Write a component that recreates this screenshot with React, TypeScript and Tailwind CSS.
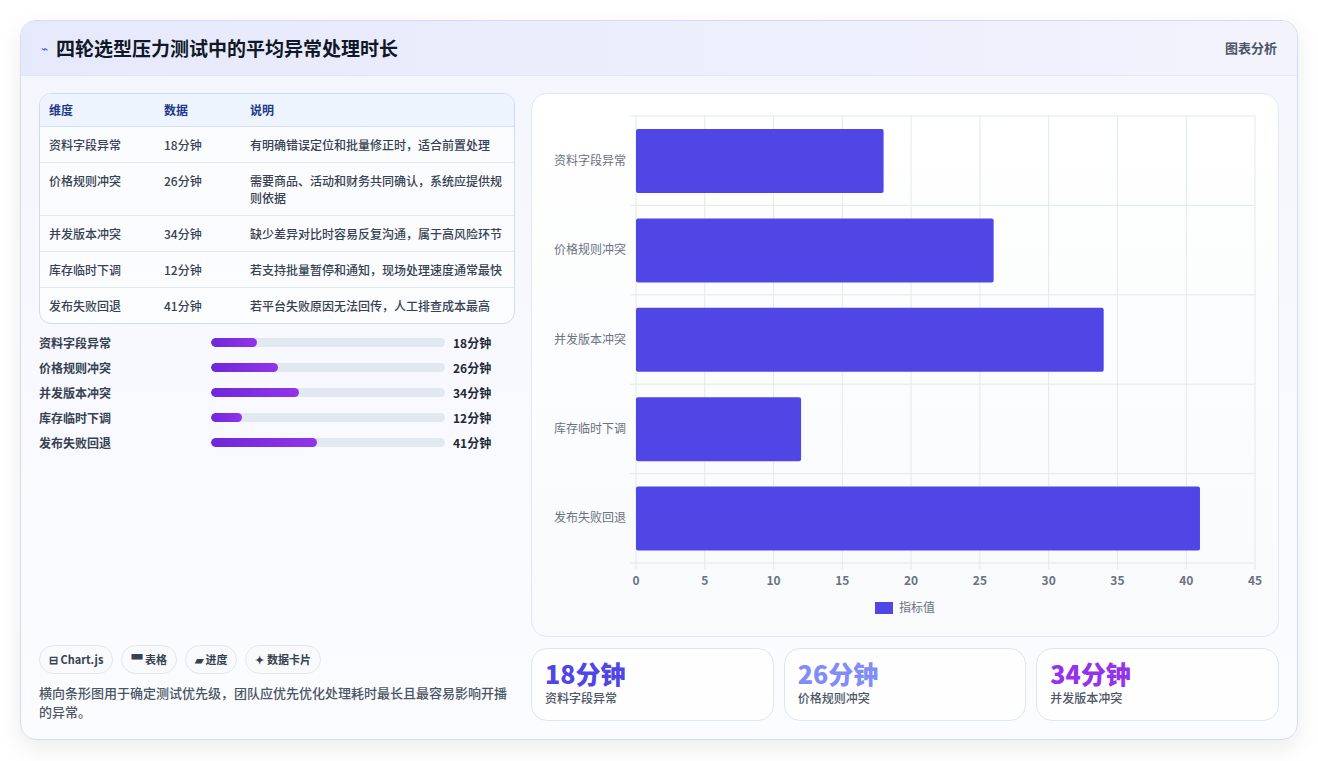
const rows = [
  { name: "资料字段异常", v: 18, note: "有明确错误定位和批量修正时，适合前置处理" },
  { name: "价格规则冲突", v: 26, note: "需要商品、活动和财务共同确认，系统应提供规则依据" },
  { name: "并发版本冲突", v: 34, note: "缺少差异对比时容易反复沟通，属于高风险环节" },
  { name: "库存临时下调", v: 12, note: "若支持批量暂停和通知，现场处理速度通常最快" },
  { name: "发布失败回退", v: 41, note: "若平台失败原因无法回传，人工排查成本最高" },
];

const font = { fontFamily: '"Noto Sans CJK SC", "Noto Sans", sans-serif' };

const Chart = () => {
  const x0 = 104, x1 = 723, y0 = 22, y1 = 469;
  const step = (y1 - y0) / 5;
  const sx = (v: number) => x0 + ((x1 - x0) * v) / 45;
  return (
    <svg width="746" height="543" className="block" style={font}>
      {Array.from({ length: 10 }, (_, i) => (
        <g key={i}>
          <line x1={sx(i * 5)} x2={sx(i * 5)} y1={y0} y2={y1 + 6} stroke="#e0ebe6" />
          <text x={sx(i * 5)} y={y1 + 22} textAnchor="middle" fontSize="12" fontWeight="600" fill="#6b7280">{i * 5}</text>
        </g>
      ))}
      {Array.from({ length: 6 }, (_, i) => (
        <line key={i} x1={x0 - 6} x2={x1} y1={y0 + i * step} y2={y0 + i * step} stroke="#e0ebe6" />
      ))}
      {rows.map((r, i) => (
        <g key={r.name}>
          <rect x={x0} y={y0 + i * step + 13} width={sx(r.v) - x0} height={64} rx="2" fill="#4f46e5" />
          <text x={x0 - 10} y={y0 + i * step + step / 2 + 4} textAnchor="end" fontSize="12" fill="#6b7280">{r.name}</text>
        </g>
      ))}
      <rect x="343" y="508" width="18" height="12" fill="#4f46e5" />
      <text x="367" y="518" fontSize="12" fill="#6b7280">指标值</text>
    </svg>
  );
};

export default function App() {
  return (
    <div className="min-h-screen bg-white p-5" style={font}>
      <div className="w-[1278px] h-[720px] rounded-2xl border border-[#d6dcf0] bg-gradient-to-b from-[#f4f6fd] to-[#fbfcff] shadow-[0_8px_24px_rgba(0,0,0,0.08)] overflow-hidden flex flex-col">
        <div className="h-[55px] shrink-0 flex items-center justify-between px-5 bg-gradient-to-r from-[#e6e9fc] to-[#f3f3fd] border-b border-[#e2e6f5]">
          <div className="flex items-center gap-2">
            <span className="text-[#3b6ae0] text-xs">⌁</span>
            <span className="text-[19px] font-bold text-[#111827]">四轮选型压力测试中的平均异常处理时长</span>
          </div>
          <span className="text-[13px] text-[#4b5563] font-semibold">图表分析</span>
        </div>
        <div className="flex gap-4 px-[18px] pt-[17px] flex-1">
          <div className="w-[478px] flex flex-col">
            <div className="rounded-xl border border-[#cfdcec] overflow-hidden bg-white/60">
              <div className="flex h-[33px] items-center bg-[#eef4fe] border-b border-[#d5deea] text-xs font-semibold text-[#1e3a8a]">
                <div className="w-[124px] pl-[9px]">维度</div>
                <div className="w-[86px]">数据</div>
                <div>说明</div>
              </div>
              {rows.map((r, i) => (
                <div key={r.name} className={`flex py-[9px] text-xs text-[#374151] font-medium leading-[17px] ${i < 4 ? "border-b border-[#e2e8f0]" : ""}`}>
                  <div className="w-[124px] pl-[9px] shrink-0">{r.name}</div>
                  <div className="w-[86px] shrink-0">{r.v}分钟</div>
                  <div className="pr-3">{r.note}</div>
                </div>
              ))}
            </div>
            <div className="mt-[10px] flex flex-col gap-[8px]">
              {rows.map((r) => (
                <div key={r.name} className="flex items-center h-[17px] text-xs font-semibold text-[#374151]">
                  <div className="w-[172px]">{r.name}</div>
                  <div className="w-[234px] h-[9px] rounded-full bg-[#e2e8f0] overflow-hidden">
                    <div className="h-full rounded-full bg-gradient-to-r from-[#6d28d9] to-[#9333ea]" style={{ width: `${(r.v / 45) * 45 * 1.1}%` }} />
                  </div>
                  <div className="ml-2 text-[#1f2937]">{r.v}分钟</div>
                </div>
              ))}
            </div>
            <div className="mt-auto pb-[18px]">
              <div className="flex gap-2 text-[11px] font-semibold text-[#374151]">
                {["⊟ Chart.js", "▀ 表格", "▰ 进度", "✦ 数据卡片"].map((t) => (
                  <span key={t} className="h-[29px] px-[9px] flex items-center rounded-full border border-[#e2e6ef] bg-[#f8fafc]">{t}</span>
                ))}
              </div>
              <p className="mt-[9px] text-[13px] leading-[19px] text-[#4b5563] font-medium pr-2">横向条形图用于确定测试优先级，团队应优先优化处理耗时最长且最容易影响开播的异常。</p>
            </div>
          </div>
          <div className="w-[748px] flex flex-col gap-[11px]">
            <div className="h-[544px] rounded-2xl border border-[#e2e8f0] bg-gradient-to-b from-white to-[#f8fafc]">
              <Chart />
            </div>
            <div className="flex gap-[10px]">
              {[
                { v: 18, n: "资料字段异常", c: "text-[#4f46e5]" },
                { v: 26, n: "价格规则冲突", c: "text-[#818cf8]" },
                { v: 34, n: "并发版本冲突", c: "text-[#9333ea]" },
              ].map((k) => (
                <div key={k.n} className="flex-1 h-[73px] rounded-2xl border border-[#dde6f3] bg-white/70 px-[13px] pt-[9px]">
                  <div className={`text-[25px] leading-[30px] font-extrabold ${k.c}`}>{k.v}分钟</div>
                  <div className="text-xs text-[#4b5563] mt-[2px] font-medium">{k.n}</div>
                </div>
              ))}
            </div>
          </div>
        </div>
      </div>
    </div>
  );
}
